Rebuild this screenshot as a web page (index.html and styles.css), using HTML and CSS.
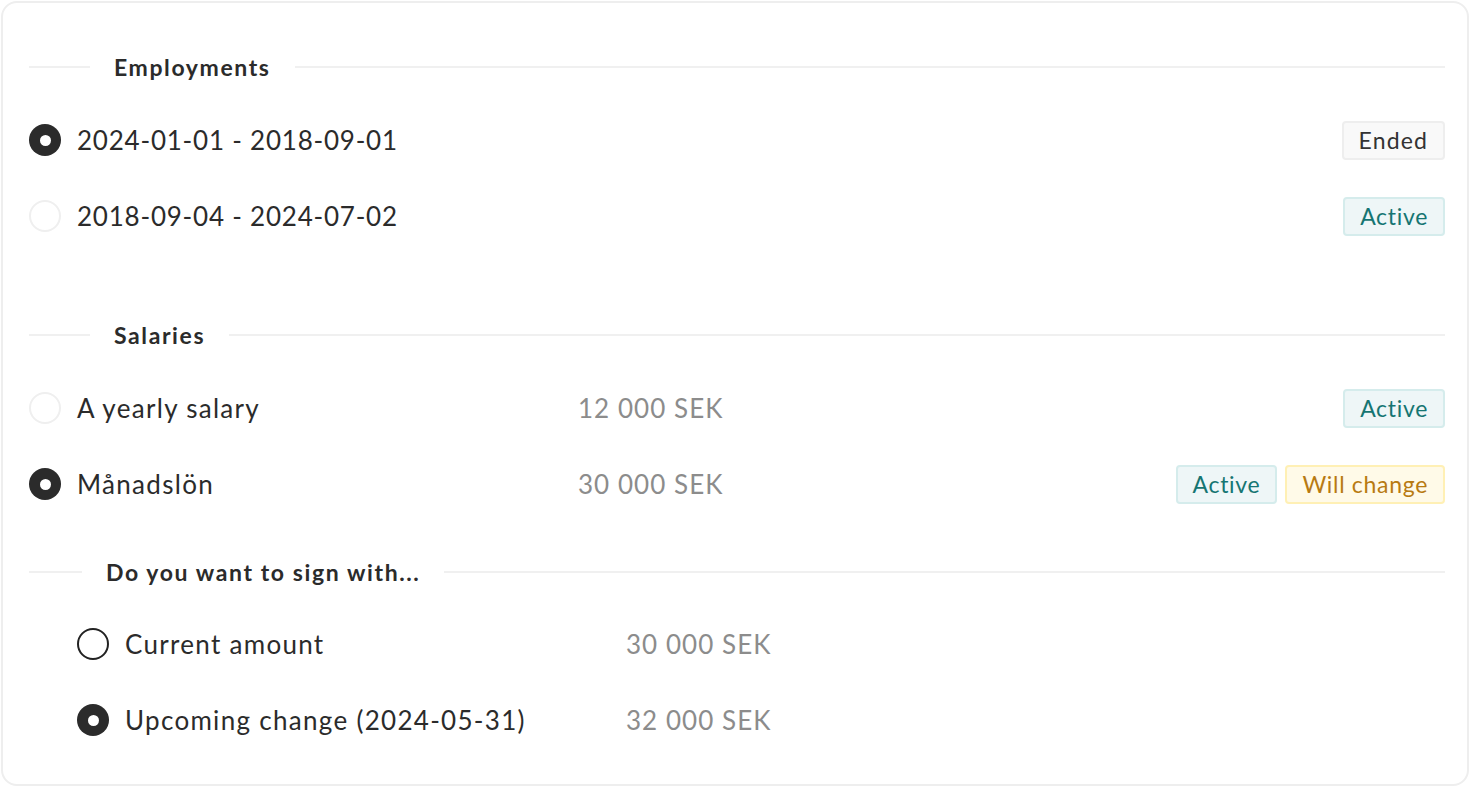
FILE: index.html
```html
<!DOCTYPE html>
<html lang="en">
<head>
<meta charset="utf-8">
<title>Sign</title>
<link rel="stylesheet" href="styles.css">
</head>
<body>
<div class="card">
  <section class="section section-first">
    <div class="divider">
      <span class="divider-lead"></span>
      <h2 class="divider-title">Employments</h2>
      <span class="divider-rest"></span>
    </div>
    <ul class="list">
      <li class="row">
        <span class="radio radio-checked"></span>
        <span class="label label-date">2024-01-01 - 2018-09-01</span>
        <span class="tags"><span class="tag tag-ended">Ended</span></span>
      </li>
      <li class="row">
        <span class="radio radio-muted"></span>
        <span class="label label-date">2018-09-04 - 2024-07-02</span>
        <span class="tags"><span class="tag tag-active">Active</span></span>
      </li>
    </ul>
  </section>

  <section class="section section-salaries">
    <div class="divider">
      <span class="divider-lead"></span>
      <h2 class="divider-title">Salaries</h2>
      <span class="divider-rest"></span>
    </div>
    <ul class="list">
      <li class="row">
        <span class="radio radio-muted"></span>
        <span class="label label-fixed">A yearly salary</span>
        <span class="amount">12 000 SEK</span>
        <span class="tags"><span class="tag tag-active">Active</span></span>
      </li>
      <li class="row">
        <span class="radio radio-checked"></span>
        <span class="label label-fixed">Månadslön</span>
        <span class="amount">30 000 SEK</span>
        <span class="tags"><span class="tag tag-active">Active</span><span class="tag tag-change">Will change</span></span>
      </li>
    </ul>
  </section>

  <section class="section section-sign">
    <div class="divider">
      <span class="divider-lead divider-lead-short"></span>
      <h2 class="divider-title">Do you want to sign with...</h2>
      <span class="divider-rest"></span>
    </div>
    <ul class="list list-indent">
      <li class="row">
        <span class="radio radio-empty"></span>
        <span class="label label-fixed">Current amount</span>
        <span class="amount">30 000 SEK</span>
      </li>
      <li class="row">
        <span class="radio radio-checked"></span>
        <span class="label label-fixed">Upcoming change (2024-05-31)</span>
        <span class="amount">32 000 SEK</span>
      </li>
    </ul>
  </section>
</div>
</body>
</html>
```
FILE: styles.css
```css
* { box-sizing: border-box; }

html, body {
  margin: 0;
  padding: 0;
  background: #ffffff;
}

body {
  padding: 1px;
  font-family: "Lato", "Open Sans", sans-serif;
  color: #2b2b2b;
}

.card {
  width: 1468px;
  height: 785px;
  border: 2px solid #eeeeee;
  border-radius: 16px;
  padding: 50px 22px 26px 26px;
  background: #ffffff;
}

.section-salaries { margin-top: 67px; }
.section-sign { margin-top: 36px; }

.divider {
  display: flex;
  align-items: center;
  height: 28px;
  gap: 24px;
}

.divider-lead {
  width: 61px;
  height: 2px;
  background: #f0f0f0;
  flex: none;
}

.divider-lead-short { width: 53px; }

.divider-rest {
  flex: 1;
  height: 2px;
  background: #f0f0f0;
}

.divider-title {
  margin: 0;
  font-size: 23px;
  font-weight: 700;
  letter-spacing: 1.6px;
  color: #2b2b2b;
  white-space: nowrap;
}

.list {
  list-style: none;
  margin: 21px 0 0 0;
  padding: 0;
}

.list-indent { padding-left: 48px; margin-top: 20px; }

.row {
  display: flex;
  align-items: center;
  height: 76px;
  gap: 16px;
  font-size: 26px;
  letter-spacing: 0.05em;
}

.radio {
  flex: none;
  width: 32px;
  height: 32px;
  border-radius: 50%;
  position: relative;
}

.radio-checked { background: #2b2b2b; }
.radio-checked::after {
  content: "";
  position: absolute;
  left: 10.5px;
  top: 10.5px;
  width: 11px;
  height: 11px;
  border-radius: 50%;
  background: #ffffff;
}

.radio-muted { border: 2px solid #efefef; }
.radio-empty { border: 2px solid #222222; }

.label {
  color: #2b2b2b;
  white-space: nowrap;
}

.label-date { letter-spacing: 0.03em; }

.label-fixed { width: 485px; flex: none; }

.amount {
  color: #8c8c8c;
  white-space: nowrap;
  letter-spacing: 0.04em;
}

.tags {
  margin-left: auto;
  display: flex;
  gap: 8px;
}

.tag {
  display: inline-flex;
  align-items: center;
  height: 39px;
  padding: 0 15px;
  border: 2px solid;
  border-radius: 4px;
  font-size: 23px;
  letter-spacing: 0.03em;
}

.tag-ended {
  background: #f9f9f9;
  border-color: #eeeeee;
  color: #333333;
  letter-spacing: 0.05em;
}

.tag-active {
  background: #eef6f7;
  border-color: #d5ecec;
  color: #157572;
}

.tag-change {
  background: #fffae8;
  border-color: #fff0b5;
  color: #b87a12;
}
```
